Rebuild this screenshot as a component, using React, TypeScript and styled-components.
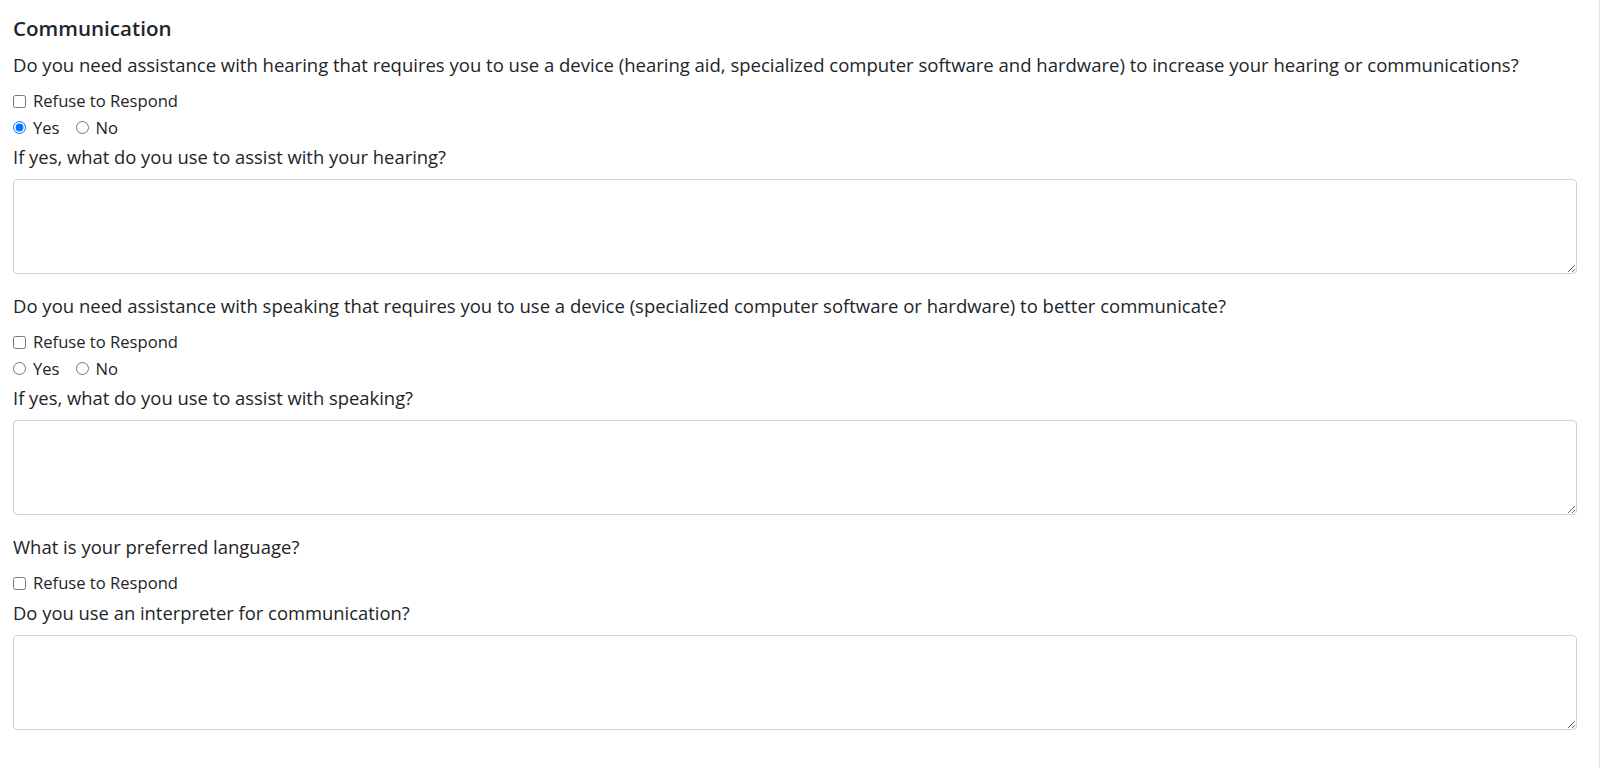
import * as React from "react";
import styled, {createGlobalStyle} from "styled-components";

const GlobalStyle = createGlobalStyle`
  html, body {
    margin: 0;
    padding: 0;
    background: #ffffff;
  }
  body {
    font-family: "Open Sans", "Noto Sans", sans-serif;
    font-size: 16px;
    color: #212529;
  }
`;

const Page = styled.div`
  width: 1600px;
  border-right: 1px solid #dee2e6;
  box-sizing: border-box;
  padding: 13px 22px 40px 13px;
  min-height: 768px;
`;

const Heading = styled.h5`
  margin: 0 0 10px;
  font-size: 20.6px;
  font-weight: 600;
  line-height: 30px;
`;

const Question = styled.div`
  margin-top: ${props => props.$first ? 0 : 20}px;
`;

const Label = styled.div`
  font-size: 18.5px;
  line-height: 24px;
  margin-bottom: 11px;
`;

const OptionRow = styled.div`
  display: flex;
  align-items: center;
  height: 26.5px;
`;

const Option = styled.label`
  display: inline-flex;
  align-items: center;
  margin-right: 16px;
  font-size: 16.6px;
  line-height: 24px;

  input {
    margin: 0 7px 0 0;
    width: 13px;
    height: 13px;
  }
`;

const SubLabel = styled.div`
  font-size: 18.4px;
  line-height: 24px;
  margin: 4px 0 10px;
`;

const TextArea = styled.textarea`
  display: block;
  width: 100%;
  height: 95px;
  box-sizing: border-box;
  border: 1px solid #ced4da;
  border-radius: 4px;
  padding: 6px 12px;
  font: inherit;
  resize: vertical;
  outline: none;
`;

interface QuestionProps {
    text: string,
    first?: boolean,
    answer?: 'yes' | 'no' | null,
    followUp?: string,
    name: string,
}

function QuestionBlock(props: QuestionProps) {
    const {text, first, answer, followUp, name} = props;
    return <Question $first={first}>
        <Label>{text}</Label>
        <OptionRow>
            <Option><input type="checkbox"/>Refuse to Respond</Option>
        </OptionRow>
        {answer !== undefined &&
            <OptionRow>
                <Option><input type="radio" name={name} defaultChecked={answer === 'yes'}/>Yes</Option>
                <Option><input type="radio" name={name} defaultChecked={answer === 'no'}/>No</Option>
            </OptionRow>}
        {followUp && <>
            <SubLabel>{followUp}</SubLabel>
            <TextArea/>
        </>}
    </Question>
}

export default function App() {
    return <>
        <GlobalStyle/>
        <Page>
            <Heading>Communication</Heading>
            <QuestionBlock
                first
                name="hearing"
                answer="yes"
                text="Do you need assistance with hearing that requires you to use a device (hearing aid, specialized computer software and hardware) to increase your hearing or communications?"
                followUp="If yes, what do you use to assist with your hearing?"
            />
            <QuestionBlock
                name="speaking"
                answer={null}
                text="Do you need assistance with speaking that requires you to use a device (specialized computer software or hardware) to better communicate?"
                followUp="If yes, what do you use to assist with speaking?"
            />
            <QuestionBlock
                name="language"
                text="What is your preferred language?"
                followUp="Do you use an interpreter for communication?"
            />
        </Page>
    </>
}
